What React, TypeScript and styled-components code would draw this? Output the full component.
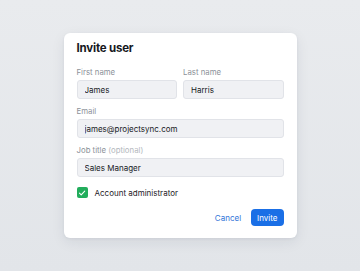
import React, { useState } from "react";
import styled, { createGlobalStyle } from "styled-components";

const GlobalStyle = createGlobalStyle`
    html, body {
        margin: 0;
        padding: 0;
    }
    body {
        font-family: Inter, "Noto Sans", sans-serif;
        background: #e6e8eb;
    }
`;

export default function App() {
    const [isAdmin, setIsAdmin] = useState(true);

    return (
        <Page>
            <GlobalStyle />
            <Card>
                <Title>Invite user</Title>
                <Row>
                    <Field>
                        <Label>First name</Label>
                        <Input defaultValue="James" />
                    </Field>
                    <Field>
                        <Label>Last name</Label>
                        <Input defaultValue="Harris" />
                    </Field>
                </Row>
                <Field>
                    <Label>Email</Label>
                    <Input defaultValue="james@projectsync.com" />
                </Field>
                <Field>
                    <Label>
                        Job title <Hint>(optional)</Hint>
                    </Label>
                    <Input defaultValue="Sales Manager" />
                </Field>
                <CheckRow onClick={() => setIsAdmin(!isAdmin)}>
                    <Box checked={isAdmin}>
                        {isAdmin && (
                            <svg width="8" height="8" viewBox="0 0 10 10">
                                <path
                                    d="M1.8 5.2 L4 7.4 L8.4 2.6"
                                    fill="none"
                                    stroke="#fff"
                                    strokeWidth="1.3"
                                    strokeLinecap="round"
                                    strokeLinejoin="round"
                                />
                            </svg>
                        )}
                    </Box>
                    <CheckText>Account administrator</CheckText>
                </CheckRow>
                <Actions>
                    <TextButton>Cancel</TextButton>
                    <PrimaryButton>Invite</PrimaryButton>
                </Actions>
            </Card>
        </Page>
    );
}

const Page = styled.div`
    width: 360px;
    height: 271px;
    display: flex;
    align-items: center;
    justify-content: center;
    background: linear-gradient(180deg, #e9ebee 0%, #e2e5e9 100%);
`;

const Card = styled.div`
    width: 233px;
    box-sizing: border-box;
    padding: 8px 13px 12px;
    background: #fff;
    border-radius: 6px;
    box-shadow: 0 4px 14px rgba(30, 40, 60, 0.08), 0 1px 3px rgba(30, 40, 60, 0.06);
    display: flex;
    flex-direction: column;
`;

const Title = styled.h2`
    margin: 0 0 11px;
    font-size: 11.5px;
    line-height: 15px;
    font-weight: 700;
    letter-spacing: -0.2px;
    color: #16181d;
`;

const Row = styled.div`
    display: grid;
    grid-template-columns: 1fr 1fr;
    gap: 6px;
`;

const Field = styled.div`
    display: flex;
    flex-direction: column;
    margin-bottom: 7px;
`;

const Label = styled.label`
    font-size: 7.8px;
    line-height: 10px;
    color: #8c9199;
    margin-bottom: 3px;
`;

const Hint = styled.span`
    color: #b4b8be;
`;

const Input = styled.input`
    box-sizing: border-box;
    height: 19px;
    width: 100%;
    padding: 0 7px;
    border: 1px solid #e1e3e8;
    border-radius: 3px;
    background: #f0f1f4;
    font-family: Inter, "Noto Sans", sans-serif;
    font-size: 8px;
    color: #17191e;
    outline: none;
`;

const CheckRow = styled.div`
    display: flex;
    align-items: center;
    gap: 7px;
    margin-top: 3px;
    cursor: pointer;
`;

interface BoxProps {
    checked?: boolean;
}

const Box = styled.span<BoxProps>`
    width: 11px;
    height: 11px;
    border-radius: 2px;
    display: flex;
    align-items: center;
    justify-content: center;
    background: ${(props) => (props.checked ? "#22ad5c" : "#fff")};
    border: ${(props) => (props.checked ? "none" : "1px solid #c9cdd3")};
`;

const CheckText = styled.span`
    font-size: 8px;
    color: #1d2026;
`;

const Actions = styled.div`
    display: flex;
    justify-content: flex-end;
    align-items: center;
    gap: 10px;
    margin-top: 11px;
`;

const TextButton = styled.button`
    border: none;
    background: none;
    padding: 0;
    font-family: Inter, "Noto Sans", sans-serif;
    font-size: 8px;
    color: #2f74d8;
    cursor: pointer;
`;

const PrimaryButton = styled.button`
    height: 17px;
    padding: 0 6px;
    border: none;
    border-radius: 4px;
    background: #1a6fe6;
    color: #fff;
    font-family: Inter, "Noto Sans", sans-serif;
    font-size: 8px;
    cursor: pointer;
`;
